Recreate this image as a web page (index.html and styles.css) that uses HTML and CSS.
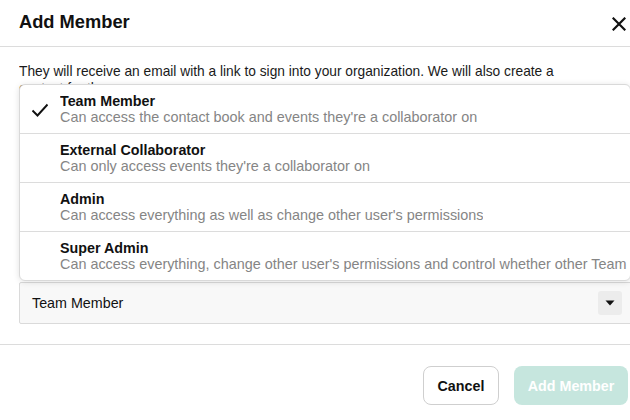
FILE: index.html
```html
<!DOCTYPE html>
<html>
<head>
<meta charset="utf-8">
<link rel="stylesheet" href="styles.css">
</head>
<body>
<div class="modal">
  <div class="modal-header">
    <h1 class="modal-title">Add Member</h1>
    <button class="close-btn" aria-label="Close">
      <svg width="14" height="14" viewBox="0 0 14 14"><path d="M1.5 1.5 L12.5 12.5 M12.5 1.5 L1.5 12.5" stroke="#111" stroke-width="2.2" stroke-linecap="square" fill="none"/></svg>
    </button>
  </div>
  <div class="modal-body">
    <p class="intro">They will receive an email with a link to sign into your organization. We will also create a contact for them.</p>
    <div class="select-wrap">
      <ul class="menu">
        <li class="menu-item selected">
          <span class="check">
            <svg width="18" height="14" viewBox="0 0 18 14"><path d="M1.5 7.5 L6.5 12.5 L16.5 1.5" stroke="#111" stroke-width="1.9" fill="none"/></svg>
          </span>
          <div class="item-text">
            <div class="item-title">Team Member</div>
            <div class="item-desc">Can access the contact book and events they're a collaborator on</div>
          </div>
        </li>
        <li class="menu-item">
          <span class="check"></span>
          <div class="item-text">
            <div class="item-title">External Collaborator</div>
            <div class="item-desc">Can only access events they're a collaborator on</div>
          </div>
        </li>
        <li class="menu-item">
          <span class="check"></span>
          <div class="item-text">
            <div class="item-title">Admin</div>
            <div class="item-desc">Can access everything as well as change other user's permissions</div>
          </div>
        </li>
        <li class="menu-item">
          <span class="check"></span>
          <div class="item-text">
            <div class="item-title">Super Admin</div>
            <div class="item-desc">Can access everything, change other user's permissions and control whether other Team Members can see the contact book</div>
          </div>
        </li>
      </ul>
      <div class="select">
        <span class="select-value">Team Member</span>
        <span class="select-arrow">
          <svg width="10" height="6" viewBox="0 0 10 6"><path d="M0.5 0.5 L9.5 0.5 L5 5.5 Z" fill="#111"/></svg>
        </span>
      </div>
    </div>
  </div>
  <div class="modal-footer">
    <button class="btn btn-cancel">Cancel</button>
    <button class="btn btn-primary" disabled>Add Member</button>
  </div>
</div>
</body>
</html>
```
FILE: styles.css
```css
html, body {
  margin: 0;
  padding: 0;
  background: #fff;
  overflow: hidden;
  width: 630px;
  height: 420px;
}
body {
  font-family: "Liberation Sans", Arial, sans-serif;
  color: #111;
}
.modal {
  width: 651px;
  background: #fff;
}
.modal-header {
  height: 47px;
  border-bottom: 1px solid #dcdcdc;
  display: flex;
  align-items: center;
  justify-content: space-between;
  padding: 0 25px 0 19px;
  box-sizing: border-box;
}
.modal-title {
  margin: 0;
  font-size: 18.3px;
  font-weight: bold;
  line-height: 22px;
  margin-top: -3px;
}
.close-btn {
  border: none;
  background: none;
  padding: 0;
  width: 14px;
  height: 14px;
  display: flex;
  margin-top: 2px;
}
.modal-body {
  padding: 16px 19px 20px 19px;
  border-bottom: 1px solid #dcdcdc;
}
.intro {
  margin: 0;
  font-size: 13.75px;
  line-height: 17px;
  color: #1a1a1a;
  width: 560px;
  height: 34px;
  overflow: hidden;
}
.select-wrap {
  position: relative;
  margin-top: 185px;
}
.menu {
  position: absolute;
  left: 0;
  right: 1px;
  bottom: calc(100% + 1px);
  margin: 0;
  padding: 0;
  list-style: none;
  background: #fff;
  border: 1px solid #d9d9d9;
  border-radius: 6px;
  box-shadow: 0 1px 6px rgba(0, 0, 0, 0.12);
  overflow: hidden;
}
.menu-item {
  display: flex;
  align-items: center;
  padding: 8px 0;
  border-bottom: 1px solid #dcdcdc;
  white-space: nowrap;
}
.menu-item:last-child {
  border-bottom: none;
}
.check {
  width: 40px;
  flex: none;
  display: flex;
  justify-content: center;
  padding-top: 1px;
}
.item-text {
  overflow: hidden;
}
.item-title {
  font-size: 14.3px;
  font-weight: bold;
  line-height: 16px;
  color: #111;
}
.item-desc {
  font-size: 14.4px;
  line-height: 16px;
  color: #858585;
}
.select {
  height: 42px;
  box-sizing: border-box;
  background: #f8f8f8;
  border: 1px solid #dadada;
  border-radius: 2px;
  display: flex;
  align-items: center;
  justify-content: space-between;
  padding: 0 9px 0 12px;
}
.select-value {
  font-size: 14.3px;
  color: #111;
}
.select-arrow {
  width: 24px;
  height: 24px;
  background: #ececec;
  border-radius: 3px;
  display: flex;
  align-items: center;
  justify-content: center;
}
.modal-footer {
  display: flex;
  justify-content: flex-end;
  gap: 15px;
  padding: 21px 23px 0 0;
}
.btn {
  height: 39px;
  border-radius: 8px;
  font-family: "Liberation Sans", Arial, sans-serif;
  font-size: 14.3px;
  font-weight: bold;
  padding: 0;
  white-space: nowrap;
}
.btn-cancel {
  background: #fff;
  border: 1px solid #cfcfcf;
  color: #111;
  width: 76px;
}
.btn-primary {
  background: #c6e6de;
  border: none;
  color: #fff;
  width: 114px;
}
```
